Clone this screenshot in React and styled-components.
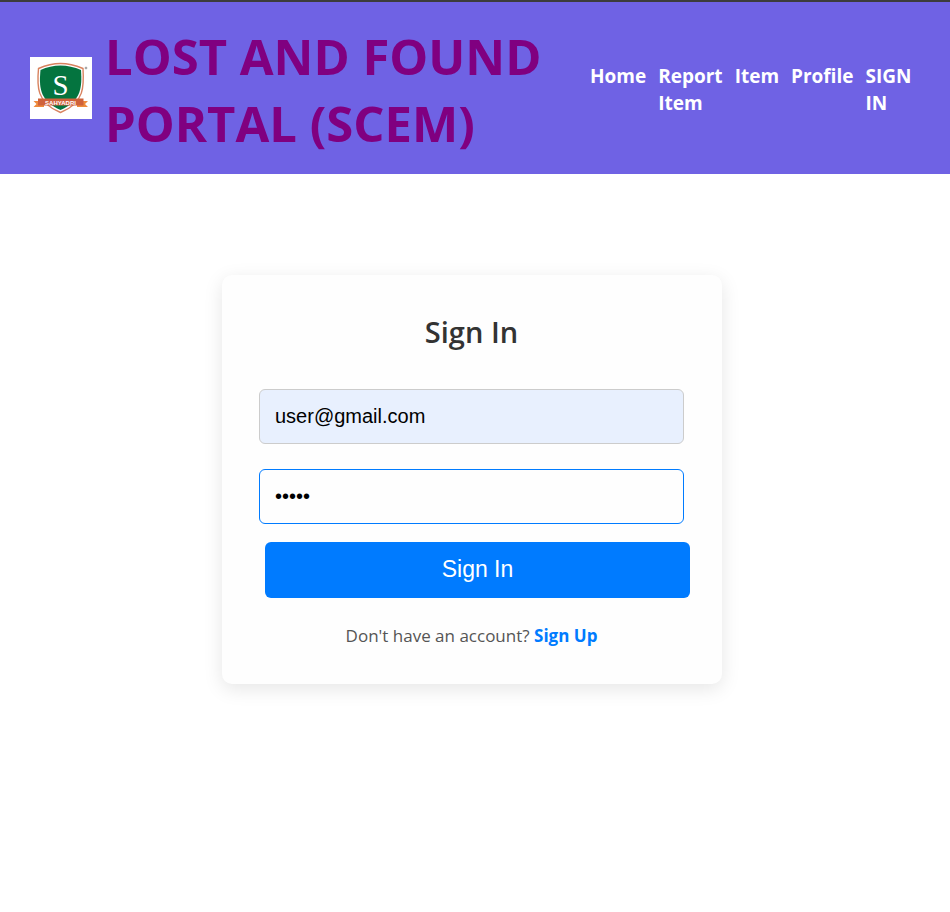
import React, { useState } from "react";
import styled, { createGlobalStyle } from "styled-components";

const GlobalStyle = createGlobalStyle`
  * { box-sizing: border-box; }
  body {
    margin: 0;
    background: #fff;
    font-family: "Open Sans", "Noto Sans", sans-serif;
  }
`;

const Header = styled.header`
  display: flex;
  align-items: center;
  justify-content: space-between;
  padding: 17px 30px;
  border-top: 2px solid #3c3c3c;
  background: #6f62e4;
`;

const Brand = styled.div`
  display: flex;
  flex: 0 1 528px;
  align-items: center;
  gap: 13px;
`;

const Logo = styled.svg`
  flex: none;
  width: 62px;
  height: 62px;
  background: #fff;
`;

const Title = styled.h1`
  margin: 0;
  padding-top: 4px;
  color: #800080;
  font-size: 49px;
  font-weight: 700;
  line-height: 67px;
`;

const NavList = styled.ul`
  display: flex;
  gap: 12px;
  width: 330px;
  margin: 0;
  padding: 4px 0 0;
  list-style: none;
`;

const NavItem = styled.li`
  width: min-content;
`;

const NavLink = styled.a`
  display: block;
  color: #fff;
  font-size: 19px;
  font-weight: 700;
  line-height: 27px;
  text-decoration: none;
`;

const Main = styled.main`
  display: flex;
  justify-content: center;
  padding: 101px 26px 40px 20px;
`;

const Card = styled.form`
  display: flex;
  flex-direction: column;
  width: 100%;
  max-width: 500px;
  padding: 37px 38px 35px 37px;
  border-radius: 10px;
  background: #fefefe;
  box-shadow: 0 5px 19px rgba(0, 0, 0, 0.1);
`;

const Heading = styled.h2`
  margin: 0 0 37px;
  color: #333;
  font-size: 29px;
  font-weight: 600;
  line-height: 40px;
  text-align: center;
`;

const Field = styled.input`
  width: 100%;
  height: 55px;
  margin-bottom: ${(p) => (p.$last ? 18 : 25)}px;
  padding: 0 15px;
  border: 1px solid ${(p) => (p.$active ? "#007bff" : "#ccc")};
  border-radius: 6px;
  outline: none;
  background: ${(p) => (p.$filled ? "#e8f0fe" : "#fefefe")};
  color: #000;
  font-family: "Liberation Sans", Arial, sans-serif;
  font-size: 20px;
`;

const SubmitButton = styled.button`
  width: 100%;
  height: 56px;
  margin-left: 6px;
  padding: 0 0 2px;
  border: 0;
  border-radius: 6px;
  background: #007bff;
  color: #fff;
  font-family: "Liberation Sans", Arial, sans-serif;
  font-size: 23px;
  cursor: pointer;
`;

const Footnote = styled.p`
  margin: 25px 0 0;
  color: #555;
  font-size: 17px;
  line-height: 26px;
  text-align: center;
`;

const SignUpLink = styled.a`
  color: #007bff;
  font-weight: 700;
  text-decoration: none;
`;

const links = ["Home", "Report Item", "Item", "Profile", "SIGN IN"];

function SahyadriLogo() {
  return (
    <Logo viewBox="0 0 62 62" role="img" aria-label="Sahyadri">
      <path d="M8.500 11.500Q20 6.500 30.500 6.500Q41 6.500 53 11.500C54 28 55 46 30.500 55.500C6 46 7 28 8.500 11.500Z" fill="#fff" stroke="#d8825f" strokeWidth="1.400" />
      <path d="M10.500 13Q20 8.500 30.500 8.500Q41 8.500 51 13C52 29 52 44 30.500 53C9 44 9 29 10.500 13Z" fill="#04743f" />
      <path d="M3.500 44H14V50H3.500L6.500 47ZM58 44H47V50H58L55 47Z" fill="#ee8b3c" />
      <path d="M8 41.500H53.500V48.500H8Z" fill="#cf623b" />
      <text x="30.500" y="38" textAnchor="middle" fill="#fff" fontFamily="Liberation Serif, serif" fontSize="29">S</text>
      <text x="30.500" y="47.500" textAnchor="middle" fill="#fff" fontFamily="Liberation Sans, sans-serif" fontWeight="700" fontSize="6">SAHYADRI</text>
      <circle cx="56" cy="11" r="1" fill="#bbb" stroke="#777" strokeWidth=".5" />
    </Logo>
  );
}

export default function App() {
  const [email, setEmail] = useState("user@gmail.com");
  const [password, setPassword] = useState("12345");

  return (
    <>
      <GlobalStyle />
      <Header>
        <Brand>
          <SahyadriLogo />
          <Title>LOST AND FOUND PORTAL (SCEM)</Title>
        </Brand>
        <nav>
          <NavList>
            {links.map((label) => (
              <NavItem key={label}>
                <NavLink href="#">{label}</NavLink>
              </NavItem>
            ))}
          </NavList>
        </nav>
      </Header>
      <Main>
        <Card onSubmit={(e) => e.preventDefault()}>
          <Heading>Sign In</Heading>
          <Field type="email" aria-label="Email" value={email} onChange={(e) => setEmail(e.target.value)} $filled />
          <Field type="password" aria-label="Password" value={password} onChange={(e) => setPassword(e.target.value)} $active $last />
          <SubmitButton type="submit">Sign In</SubmitButton>
          <Footnote>
            Don't have an account? <SignUpLink href="#">Sign Up</SignUpLink>
          </Footnote>
        </Card>
      </Main>
    </>
  );
}
